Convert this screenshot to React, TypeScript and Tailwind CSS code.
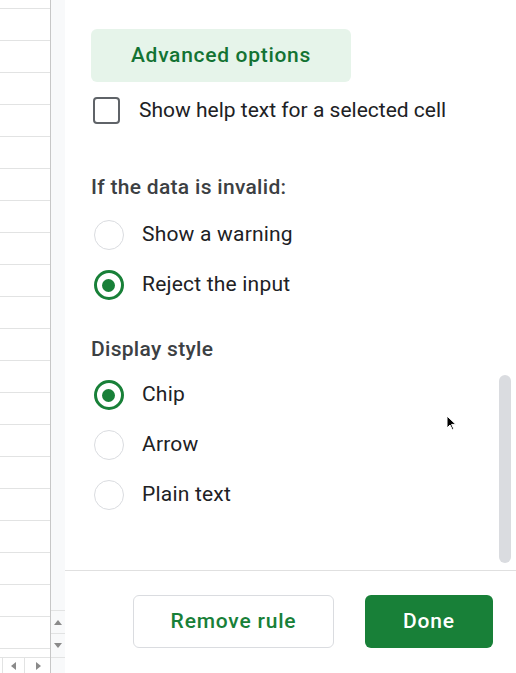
import React from 'react'

const font = { fontFamily: 'Roboto, "Noto Sans", Arial, sans-serif' }

const Radio = ({ checked, label }: { checked?: boolean; label: string }) => (
  <div className="flex items-center h-[50px]">
    <div className="w-[31px] h-[31px] flex items-center justify-center ml-[2px]">
      {checked ? (
        <div className="w-[30px] h-[30px] rounded-full border-[3px] border-[#188038] flex items-center justify-center">
          <div className="w-[13px] h-[13px] rounded-full bg-[#188038]" />
        </div>
      ) : (
        <div className="w-[30px] h-[30px] rounded-full border-[1.5px] border-[#dadce0] bg-white" />
      )}
    </div>
    <span className="ml-[18px] text-[21px] tracking-[0.2px] text-[#202124]">{label}</span>
  </div>
)

export default function App() {
  const rows = Array.from({ length: 21 }, (_, i) => i)

  return (
    <div className="w-[516px] h-[673px] flex overflow-hidden bg-white relative" style={font}>
      {/* sheet strip */}
      <div className="w-[51px] h-full flex flex-col border-r border-[#c7c7c7]">
        <div className="flex-1 overflow-hidden">
          <div className="h-[9px] border-b border-[#e2e3e3]" />
          {rows.map(r => (
            <div key={r} className="h-[32px] border-b border-[#e2e3e3]" />
          ))}
        </div>
        <div className="h-[16px] flex border-t border-[#e2e3e3] bg-white">
          <div className="w-[3px] border-r border-[#e2e3e3]" />
          <div className="w-[22px] border-r border-[#e2e3e3] flex items-center justify-center">
            <svg width="6" height="8" viewBox="0 0 6 8"><path d="M5 0 L0 4 L5 8 Z" fill="#8a8a8a" /></svg>
          </div>
          <div className="flex-1 flex items-center justify-center">
            <svg width="6" height="8" viewBox="0 0 6 8"><path d="M1 0 L6 4 L1 8 Z" fill="#8a8a8a" /></svg>
          </div>
        </div>
      </div>

      {/* sheet vertical scrollbar */}
      <div className="w-[14px] h-full flex flex-col bg-[#f8f9fa]">
        <div className="flex-1" />
        <div className="h-[23px] border-t border-[#e2e3e3] flex items-center justify-center">
          <svg width="8" height="5" viewBox="0 0 8 5"><path d="M0 5 L4 0 L8 5 Z" fill="#8a8a8a" /></svg>
        </div>
        <div className="h-[24px] border-t border-[#e2e3e3] flex items-center justify-center">
          <svg width="8" height="5" viewBox="0 0 8 5"><path d="M0 0 L4 5 L8 0 Z" fill="#8a8a8a" /></svg>
        </div>
        <div className="h-[16px] border-t border-[#e2e3e3]" />
      </div>

      {/* side panel */}
      <div className="flex-1 h-full flex flex-col bg-white">
        <div className="h-[570px] pl-[26px] pt-[29px] relative">
          <button className="w-[260px] h-[53px] rounded-[6px] bg-[#e6f4ea] text-[#137333] text-[21px] font-medium tracking-[0.7px]">
            Advanced options
          </button>

          <div className="flex items-center h-[57px]">
            <div className="ml-[2px] w-[27px] h-[27px] rounded-[4px] border-[2.5px] border-[#5f6368]" />
            <span className="ml-[19px] text-[21px] text-[#202124]">Show help text for a selected cell</span>
          </div>

          <div className="mt-[36px] text-[21px] text-[#3c4043] font-medium tracking-[0.3px] leading-[24px]">If the data is invalid:</div>
          <div className="mt-[11px]">
            <Radio label="Show a warning" />
            <Radio checked label="Reject the input" />
          </div>

          <div className="mt-[27px] text-[21px] text-[#3c4043] font-medium tracking-[0.3px] leading-[24px]">Display style</div>
          <div className="mt-[9px]">
            <Radio checked label="Chip" />
            <Radio label="Arrow" />
            <Radio label="Plain text" />
          </div>

          {/* panel scrollbar */}
          <div className="absolute right-[5px] top-[375px] w-[12px] h-[188px] rounded-full bg-[#dadce0]" />
        </div>

        <div className="flex-1 border-t border-[#e0e0e0] flex items-start justify-end gap-[31px] pr-[23px] pt-[24px]">
          <button className="w-[201px] h-[53px] rounded-[6px] border border-[#dadce0] bg-white text-[#188038] text-[21px] font-medium tracking-[0.8px]">
            Remove rule
          </button>
          <button className="w-[128px] h-[53px] rounded-[6px] bg-[#188038] text-white text-[21px] font-medium tracking-[0.8px]">
            Done
          </button>
        </div>
      </div>

      {/* mouse cursor */}
      <svg className="absolute left-[446px] top-[415px]" width="11" height="16" viewBox="0 0 11 16">
        <path d="M1 1 L1 13 L4 10 L6.5 15 L8 14.3 L5.6 9.4 L9.8 9.4 Z" fill="#000" stroke="#fff" strokeWidth="1" />
      </svg>
    </div>
  )
}
